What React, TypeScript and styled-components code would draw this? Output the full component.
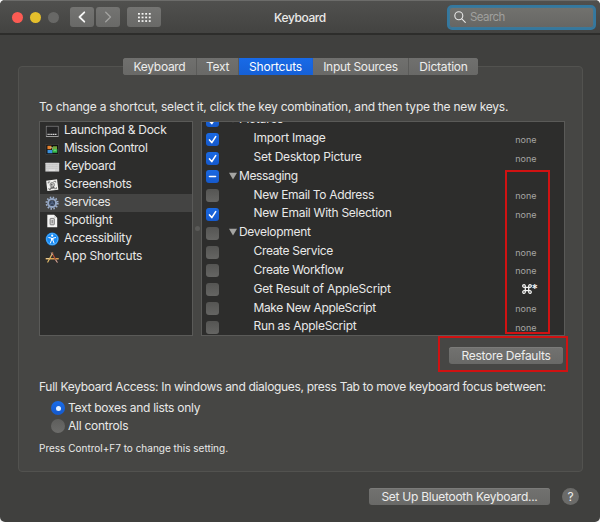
import React from "react";
import styled, { createGlobalStyle, css } from "styled-components";

const GlobalStyle = createGlobalStyle`
  * { box-sizing: border-box; }
  html, body { margin: 0; background: #f4f4f4; }
  body { width: 600px; height: 522px; overflow: hidden; }
  svg { display: block; flex: none; }
`;

const Window = styled.main`
  position: relative;
  width: 600px;
  height: 522px;
  overflow: hidden;
  border-radius: 5px;
  background: #40403e;
  color: #e9e9e8;
  font: 12px/18px Inter, "Liberation Sans", sans-serif;
  white-space: nowrap;
`;

const TitleBar = styled.header`
  display: grid;
  grid-template-columns: 161px 1fr 161px;
  align-items: center;
  height: 35px;
  padding: 0 4px 0 12px;
  border-top: 1px solid #6c6c6a;
  border-bottom: 2px solid #2d2d2b;
  background: linear-gradient(#50504e, #434341);
`;

const Controls = styled.div`
  display: flex;
  align-items: center;
`;

const Light = styled.i<{ $color: string }>`
  width: 11px;
  height: 11px;
  margin-right: 7px;
  border-radius: 50%;
  background: ${(p) => p.$color};
`;

const ToolButton = styled.button<{ $width: number; $gap: number }>`
  display: flex;
  align-items: center;
  justify-content: center;
  width: ${(p) => p.$width}px;
  height: 20px;
  margin: 0 0 0 ${(p) => p.$gap}px;
  padding: 0;
  border: 0;
  border-radius: 3px;
  background: linear-gradient(#747472, #696967);
`;

const Title = styled.h1`
  margin: 0 8px 0 0;
  padding-top: 1px;
  font-size: 12px;
  font-weight: 500;
  line-height: 20px;
  text-align: center;
  letter-spacing: -0.4px;
`;

const SearchField = styled.label`
  display: flex;
  align-items: center;
  justify-self: end;
  gap: 4px;
  width: 149px;
  height: 25px;
  padding-left: 5px;
  border: 2px solid #34789f;
  border-radius: 5px;
  background: linear-gradient(#72726e, #666664);
  box-shadow: inset 0 0 0 1px #3d7898;
  color: #a0a09e;
  font-size: 11.5px;
  letter-spacing: -0.55px;
`;

const GroupBox = styled.section`
  width: 565px;
  height: 406px;
  margin: 31px 0 0 18px;
  padding: 0 0 0 20px;
  border: 1px solid #52524f;
  border-radius: 4px;
  background: #464644;
`;

const Tabs = styled.nav`
  display: flex;
  width: 355px;
  height: 17px;
  margin: -9px 0 0 84px;
  border-radius: 3px;
  overflow: hidden;
  background: #6c6c6a;
`;

const Tab = styled.button<{ $width: number; $active?: boolean; $spacing?: number }>`
  width: ${(p) => p.$width}px;
  padding: 0;
  border: 0;
  border-right: 1px solid #5b5b59;
  background: linear-gradient(#70706e, #696967);
  color: #ededec;
  font: inherit;
  line-height: 17px;
  letter-spacing: ${(p) => p.$spacing ?? -0.3}px;
  &:last-child { border-right: 0; }
  ${(p) => p.$active && css`
    border-color: #1862d8;
    background: linear-gradient(#186ae7, #1660d6);
    color: #fff;
  `}
`;

const Paragraph = styled.p<{ $top: number; $spacing?: number; $small?: boolean }>`
  margin: ${(p) => p.$top}px 0 0;
  font-size: ${(p) => (p.$small ? 10 : 12)}px;
  line-height: 18px;
  letter-spacing: ${(p) => p.$spacing ?? 0}px;
`;

const Panes = styled.div`
  display: flex;
  margin-top: 5px;
  height: 215px;
`;

const Categories = styled.ul`
  width: 154px;
  margin: 0;
  padding: 0;
  border: 1px solid #5a5a58;
  background: #2d2d2c;
  list-style: none;
`;

const Category = styled.li<{ $selected?: boolean }>`
  display: flex;
  align-items: center;
  gap: 4px;
  height: 18px;
  padding-left: 5px;
  background: ${(p) => (p.$selected ? "#444443" : "transparent")};
`;

const CategoryLabel = styled.span<{ $spacing: number }>`
  padding-bottom: 2px;
  letter-spacing: ${(p) => p.$spacing}px;
`;

const Splitter = styled.div`
  display: flex;
  align-items: center;
  justify-content: center;
  width: 8px;
  &::after {
    content: "";
    width: 5px;
    height: 5px;
    border-radius: 50%;
    background: #5a5a58;
  }
`;

const ServiceTable = styled.div`
  width: 364px;
  overflow: hidden;
  border: 1px solid #5a5a58;
  background: #2d2d2c;
`;

const ServiceRows = styled.div`
  margin-top: -12px;
`;

const ServiceRow = styled.div`
  display: flex;
  align-items: center;
  height: 18.82px;
  padding-left: 4px;
`;

const CheckBox = styled.span<{ $on: boolean }>`
  display: flex;
  flex: none;
  align-items: center;
  justify-content: center;
  width: 13px;
  height: 13px;
  margin-top: 2px;
  border-radius: 3px;
  background: ${(p) => (p.$on ? "linear-gradient(#1a69e2, #1559cc)" : "linear-gradient(#555553, #656563)")};
`;

const ServiceName = styled.span<{ $group?: boolean; $spacing: number }>`
  display: flex;
  align-items: center;
  gap: 2px;
  flex: 1;
  padding-left: ${(p) => (p.$group ? 10 : 34.5)}px;
  letter-spacing: ${(p) => p.$spacing}px;
`;

const Shortcut = styled.span<{ $set?: boolean }>`
  display: flex;
  align-items: center;
  justify-content: flex-end;
  margin-right: ${(p) => (p.$set ? 26 : 27.5)}px;
  color: ${(p) => (p.$set ? "#f0f0ef" : "#a5a5a3")};
  font-size: ${(p) => (p.$set ? 12 : 9)}px;
  font-weight: ${(p) => (p.$set ? 600 : 400)};
  padding-top: ${(p) => (p.$set ? 0 : 3)}px;
`;

const PushButton = styled.button<{ $width: number }>`
  display: block;
  width: ${(p) => p.$width}px;
  height: 17px;
  padding: 0;
  border: 0;
  border-radius: 3px;
  background: linear-gradient(#727270, #696967);
  box-shadow: inset 0 1px #7b7b79;
  color: #ededec;
  font: inherit;
  line-height: 17px;
  letter-spacing: -0.27px;
`;

const RestoreRow = styled.div`
  display: flex;
  padding: 11px 0 0 410px;
`;

const RadioGroup = styled.div`
  margin: 3px 0 0 12px;
`;

const RadioRow = styled.label<{ $spacing: number }>`
  display: flex;
  align-items: center;
  gap: 3px;
  height: 18px;
  letter-spacing: ${(p) => p.$spacing}px;
`;

const Radio = styled.i<{ $on?: boolean }>`
  display: flex;
  align-items: center;
  justify-content: center;
  width: 14px;
  height: 14px;
  border-radius: 50%;
  background: ${(p) => (p.$on ? "linear-gradient(#196be6, #1559cc)" : "linear-gradient(#5e5e5c, #6c6c6a)")};
  &::after {
    content: "";
    width: 5px;
    height: 5px;
    border-radius: 50%;
    background: ${(p) => (p.$on ? "#e4f1ff" : "transparent")};
  }
`;

const Footer = styled.footer`
  display: flex;
  align-items: center;
  justify-content: flex-end;
  gap: 12px;
  margin-top: 16px;
  padding-right: 21px;
`;

const HelpButton = styled.button`
  width: 17px;
  height: 17px;
  padding: 0;
  border: 0;
  border-radius: 50%;
  background: #6b6b69;
  color: #ededec;
  font: 12px/17px Inter, sans-serif;
`;

const Highlight = styled.div<{ $x: number; $y: number; $w: number; $h: number }>`
  position: absolute;
  left: ${(p) => p.$x}px;
  top: ${(p) => p.$y}px;
  width: ${(p) => p.$w}px;
  height: ${(p) => p.$h}px;
  border: 2px solid #d01212;
  pointer-events: none;
`;

const Chevron = ({ left }: { left?: boolean }) => (
  <svg width="10" height="12" viewBox="0 0 10 12" fill="none" stroke={left ? "#f5f5f4" : "#a3a3a1"} strokeWidth={left ? 1.8 : 1.3} strokeLinecap="round" strokeLinejoin="round">
    <path d={left ? "M7.3 1.3 2.5 6l4.8 4.7" : "m2.7 1.3 4.8 4.7-4.8 4.7"} />
  </svg>
);

const GridIcon = () => (
  <svg width="13" height="9" viewBox="0 0 13 9" fill="#f5f5f4">
    {[0, 3.6, 7.2].map((y) => [0, 3.6, 7.2, 10.8].map((x) => <rect key={`${x}-${y}`} x={x} y={y} width="1.9" height="1.7" />))}
  </svg>
);

const SearchIcon = () => (
  <svg width="12" height="12" viewBox="0 0 12 12" fill="none" stroke="#e9e9e8" strokeWidth="1.1" strokeLinecap="round">
    <circle cx="4.8" cy="4.8" r="4" />
    <path d="m7.8 7.8 3.5 3.5" />
  </svg>
);

const CheckMark = ({ mixed }: { mixed?: boolean }) => (
  <svg width="13" height="13" viewBox="0 0 13 13" fill="none" stroke="#fff" strokeWidth="1.6" strokeLinecap="round" strokeLinejoin="round">
    <path d={mixed ? "M3.5 6.5h6" : "m3.5 6.9 2.3 2.7 3.9-6"} />
  </svg>
);

const Disclosure = () => (
  <svg width="8" height="8" viewBox="0 0 8 8" fill="#a4a4a2"><path d="M0 .8h8L4 7.5Z" /></svg>
);

const CommandIcon = () => (
  <svg width="10" height="10" viewBox="0 0 10 10" fill="none" stroke="#f0f0ef" strokeWidth="1.3">
    <path d="M3.3 3.3h3.4v3.4H3.3ZM3.3 3.3V2.1a1.3 1.3 0 1 0-1.3 1.2ZM6.7 3.3H8a1.3 1.3 0 1 0-1.3-1.2ZM6.7 6.7v1.2A1.3 1.3 0 1 0 8 6.7ZM3.3 6.7H2a1.3 1.3 0 1 0 1.3 1.2Z" />
  </svg>
);

type IconKind = "dock" | "mission" | "keyboard" | "shot" | "gear" | "doc" | "access" | "apps";

const drawings: Record<IconKind, React.ReactNode> = {
  dock: (
    <>
      <rect x="1.2" y="2.2" width="12" height="10.3" fill="#252526" stroke="#929292" strokeWidth=".6" />
      <path d="M1 12.5h12.5" stroke="#b8b8b8" strokeWidth=".7" />
      <path d="M2.5 10.4h9.5" stroke="#d9d9d9" strokeWidth="1.1" strokeDasharray="1.3 .5" />
    </>
  ),
  mission: (
    <>
      <rect x="1" y="2.3" width="12.4" height="10" fill="#101010" stroke="#505050" strokeWidth=".5" />
      <path fill="#e88330" d="M2.4 3.7h4v3.6h-4z" />
      <path fill="#3b91dd" d="M2.5 8h5v3.2h-5z" />
      <path fill="#75a63b" d="M8 4.2h4v2.7H8z" />
      <path fill="#36ba4c" d="M7.5 7h4.8v3.8H7.5z" />
      <path d="M5.1 5.4h2.4v2.4M8.8 8.2h2.5" stroke="#a9d9a6" strokeWidth=".7" fill="none" />
    </>
  ),
  keyboard: (
    <>
      <rect x=".4" y="2.7" width="13.8" height="8.9" rx=".5" fill="#d4d4d4" />
      <path d="M1.3 4.5h12M1.3 6.4h12M1.3 8.3h12" stroke="#bcbcbc" strokeWidth=".7" strokeDasharray="1 .4" />
      <path d="M4 10.2h6" stroke="#f5f5f5" strokeWidth=".8" />
      <path d="M.6 11.4h13.4" stroke="#8e8e8e" strokeWidth=".6" />
    </>
  ),
  shot: (
    <g transform="rotate(-7 7 7)">
      <rect x="1.7" y="2" width="11" height="10.5" fill="#f1f1ef" />
      <path d="M3.5 5V3.7h2M9 3.7h2V5M11 9.6v1.5H9M5.5 11.1h-2V9.6" fill="none" stroke="#555" strokeWidth=".7" />
      <circle cx="7.3" cy="6.8" r="2.3" fill="#c2c2c0" stroke="#656565" strokeWidth=".6" />
      <path d="m4.6 10.7 1-1.9 1.4.7 1.2-1.2 1.6 2.2" fill="#565656" />
      <circle cx="6.7" cy="6.5" r=".9" fill="#686868" />
    </g>
  ),
  gear: (
    <g stroke="#9eafcb" fill="none">
      <circle cx="7.1" cy="7.1" r="5.7" strokeWidth="1.7" strokeDasharray="1.45 1.53" />
      <circle cx="7.1" cy="7.1" r="4" strokeWidth="2" stroke="#93a5c2" />
      <circle cx="7.1" cy="7.1" r="2.6" fill="#34445f" stroke="none" />
      <path d="M7.1 7.1V4.4M7.1 7.1l2.4 1.4M7.1 7.1l-2.4 1.4" strokeWidth=".6" stroke="#7487a6" />
    </g>
  ),
  doc: (
    <>
      <path d="M2.3.8h6.8L12.2 4v9.2H2.3Z" fill="#f5f5f4" />
      <path d="M9.1.8V4h3.1Z" fill="#cfcfcd" />
      <rect x="5.1" y="4.4" width="4.2" height="6.4" rx=".6" fill="#d5d5d5" stroke="#666" strokeWidth=".8" />
      <path d="M7.2 6v3.2" stroke="#777" strokeWidth="1" />
    </>
  ),
  access: (
    <>
      <circle cx="7.2" cy="7.1" r="6.5" fill="#1689f3" />
      <circle cx="7.2" cy="7.1" r="5.6" fill="none" stroke="#77c7ff" strokeWidth=".6" />
      <circle cx="7.2" cy="3.7" r="1.1" fill="#fff" />
      <path d="m3.8 5.6 2.7.5v2l-1.1 3M10.6 5.6l-2.7.5v2l1.1 3M6.5 6.5h1.4M6.5 7.8h1.4" fill="none" stroke="#fff" strokeWidth="1" strokeLinecap="round" />
    </>
  ),
  apps: (
    <g fill="none" strokeLinecap="round">
      <path d="M1.2 8.8h12" stroke="#d6a150" strokeWidth="1.5" />
      <path d="m7.7 3-4.9 9" stroke="#e0b96a" strokeWidth="1.2" />
      <path d="m7 3 5 9" stroke="#b04e36" strokeWidth="1.3" />
      <path d="m6.4 2.9 1 1.7" stroke="#c3c3c0" strokeWidth=".8" />
      <path d="m10.7 10 1.5 2.2" stroke="#bdbdbb" strokeWidth=".9" />
      <path d="M1.5 8.5h2" stroke="#ead7a8" strokeWidth=".8" />
    </g>
  ),
};

const CategoryIcon = ({ kind }: { kind: IconKind }) => (
  <svg width="15" height="14" viewBox="0 0 15 14">{drawings[kind]}</svg>
);

const categories: { label: string; icon: IconKind; spacing: number }[] = [
  { label: "Launchpad & Dock", icon: "dock", spacing: -0.28 },
  { label: "Mission Control", icon: "mission", spacing: -0.32 },
  { label: "Keyboard", icon: "keyboard", spacing: -0.35 },
  { label: "Screenshots", icon: "shot", spacing: -0.3 },
  { label: "Services", icon: "gear", spacing: -0.38 },
  { label: "Spotlight", icon: "doc", spacing: -0.22 },
  { label: "Accessibility", icon: "access", spacing: -0.3 },
  { label: "App Shortcuts", icon: "apps", spacing: -0.22 },
];

type Service = { name: string; state: "on" | "off" | "mixed"; group?: boolean; keys?: string; spacing: number };

const services: Service[] = [
  { name: "Pictures", state: "on", group: true, spacing: -0.25 },
  { name: "Import Image", state: "on", spacing: -0.26 },
  { name: "Set Desktop Picture", state: "on", spacing: -0.21 },
  { name: "Messaging", state: "mixed", group: true, spacing: -0.36 },
  { name: "New Email To Address", state: "off", spacing: -0.33 },
  { name: "New Email With Selection", state: "on", spacing: -0.26 },
  { name: "Development", state: "off", group: true, spacing: -0.3 },
  { name: "Create Service", state: "off", spacing: -0.33 },
  { name: "Create Workflow", state: "off", spacing: -0.34 },
  { name: "Get Result of AppleScript", state: "off", keys: "*", spacing: -0.23 },
  { name: "Make New AppleScript", state: "off", spacing: -0.36 },
  { name: "Run as AppleScript", state: "off", spacing: -0.29 },
];

export default function App() {
  return (
    <>
      <GlobalStyle />
      <Window>
        <TitleBar>
          <Controls>
            <Light $color="#fc5b53" />
            <Light $color="#e5bf2c" />
            <Light $color="#686866" />
            <ToolButton $width={24} $gap={4} aria-label="Back"><Chevron left /></ToolButton>
            <ToolButton $width={24} $gap={2} aria-label="Forward"><Chevron /></ToolButton>
            <ToolButton $width={34} $gap={7} aria-label="Show all"><GridIcon /></ToolButton>
          </Controls>
          <Title>Keyboard</Title>
          <SearchField><SearchIcon />Search</SearchField>
        </TitleBar>

        <GroupBox>
          <Tabs>
            <Tab $width={74}>Keyboard</Tab>
            <Tab $width={42}>Text</Tab>
            <Tab $width={74} $active $spacing={-0.2}>Shortcuts</Tab>
            <Tab $width={96}>Input Sources</Tab>
            <Tab $width={69} $spacing={-0.2}>Dictation</Tab>
          </Tabs>

          <Paragraph $top={23} $spacing={-0.22}>To change a shortcut, select it, click the key combination, and then type the new keys.</Paragraph>

          <Panes>
            <Categories>
              {categories.map((c) => (
                <Category key={c.label} $selected={c.label === "Services"}>
                  <CategoryIcon kind={c.icon} />
                  <CategoryLabel $spacing={c.spacing}>{c.label}</CategoryLabel>
                </Category>
              ))}
            </Categories>
            <Splitter />
            <ServiceTable>
              <ServiceRows>
                {services.map((s) => (
                  <ServiceRow key={s.name}>
                    <CheckBox $on={s.state !== "off"}>{s.state !== "off" && <CheckMark mixed={s.state === "mixed"} />}</CheckBox>
                    <ServiceName $group={s.group} $spacing={s.spacing}>
                      {s.group && <Disclosure />}
                      <span>{s.name}</span>
                    </ServiceName>
                    {!s.group && (
                      <Shortcut $set={!!s.keys}>{s.keys ? <><CommandIcon />{s.keys}</> : "none"}</Shortcut>
                    )}
                  </ServiceRow>
                ))}
              </ServiceRows>
            </ServiceTable>
          </Panes>

          <RestoreRow><PushButton $width={114}>Restore Defaults</PushButton></RestoreRow>

          <Paragraph $top={14} $spacing={-0.31}>Full Keyboard Access: In windows and dialogues, press Tab to move keyboard focus between:</Paragraph>
          <RadioGroup>
            <RadioRow $spacing={-0.28}><Radio $on />Text boxes and lists only</RadioRow>
            <RadioRow $spacing={-0.25}><Radio />All controls</RadioRow>
          </RadioGroup>
          <Paragraph $top={4} $small>Press Control+F7 to change this setting.</Paragraph>
        </GroupBox>

        <Footer>
          <PushButton $width={181}>Set Up Bluetooth Keyboard...</PushButton>
          <HelpButton>?</HelpButton>
        </Footer>

        <Highlight $x={505} $y={170} $w={45} $h={164} />
        <Highlight $x={438} $y={336} $w={130} $h={36} />
      </Window>
    </>
  );
}
